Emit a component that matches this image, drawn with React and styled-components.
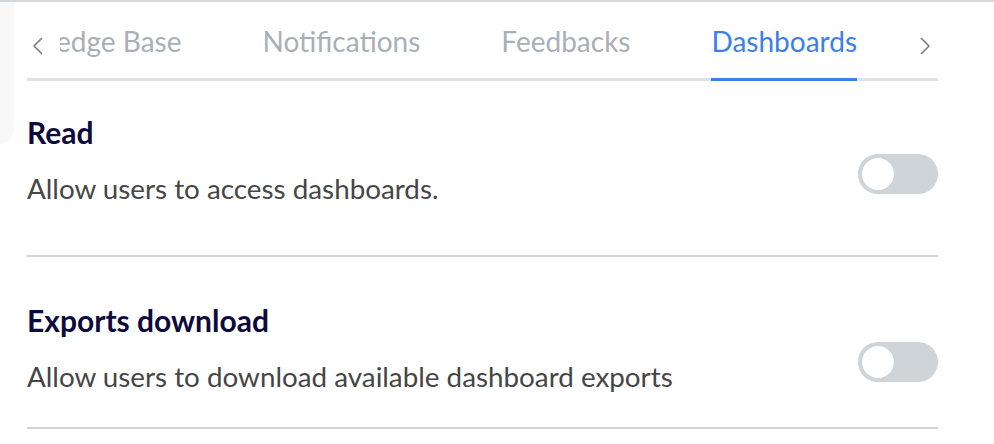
import React from "react";
import styled, { createGlobalStyle } from "styled-components";

const GlobalStyle = createGlobalStyle`
  html, body {
    margin: 0;
    padding: 0;
    background: #ffffff;
  }
  body {
    font-family: "Lato", "Noto Sans", sans-serif;
  }
`;

const Page = styled.div`
  position: relative;
  width: 994px;
  height: 444px;
  box-sizing: border-box;
  border-top: 2px solid #d3d7db;
  padding: 0 56px 0 27px;
  overflow: hidden;

  &::before {
    content: "";
    position: absolute;
    left: 0;
    top: 0;
    width: 14px;
    height: 142px;
    background: #f8f8f9;
    border-bottom-right-radius: 14px;
  }
`;

const TabBar = styled.div`
  display: flex;
  align-items: stretch;
  box-shadow: inset 0 -3px 0 #dfe2e6;
`;

const ArrowButton = styled.button`
  display: flex;
  align-items: center;
  justify-content: ${(p) => (p.$side === "left" ? "flex-start" : "flex-end")};
  width: ${(p) => (p.$side === "left" ? "33px" : "81px")};
  padding: ${(p) => (p.$side === "left" ? "8px 0 0 5px" : "8px 7px 0 0")};
  border: none;
  background: transparent;
  color: #7c7c7c;
  cursor: pointer;
  flex-shrink: 0;
`;

const TabViewport = styled.div`
  flex: 1;
  display: flex;
  justify-content: flex-end;
  gap: 81px;
  overflow: hidden;
  white-space: nowrap;
`;

const Tab = styled.div`
  flex-shrink: 0;
  padding: 24px 0 22px;
  font-size: 28px;
  line-height: 30px;
  color: ${(p) => (p.$active ? "#3b80ea" : "#a9afb7")};
  border-bottom: 3px solid ${(p) => (p.$active ? "#3b80ea" : "transparent")};
`;

const List = styled.div`
  display: flex;
  flex-direction: column;
`;

const Row = styled.div`
  display: flex;
  align-items: center;
  justify-content: space-between;
  padding: 45px 0 33px;
  border-bottom: 2px solid #d1d5d9;

  &:first-child {
    padding: 33px 0 49px;
  }
`;

const TextBlock = styled.div`
  display: flex;
  flex-direction: column;
  gap: 22px;
`;

const Heading = styled.div`
  font-size: 30px;
  line-height: 36px;
  font-weight: 700;
  color: #0d0b3d;
`;

const Description = styled.div`
  font-size: 27.8px;
  line-height: 34px;
  color: #464646;
`;

const Toggle = styled.div`
  position: relative;
  width: 80px;
  height: 40px;
  margin-top: 28px;
  border-radius: 20px;
  background: ${(p) => (p.$on ? "#3b80ea" : "#cfd4d9")};
  flex-shrink: 0;

  &::after {
    content: "";
    position: absolute;
    top: 4px;
    left: ${(p) => (p.$on ? "44px" : "4px")};
    width: 32px;
    height: 32px;
    border-radius: 50%;
    background: #ffffff;
  }
`;

const Chevron = ({ dir }) => (
  <svg width="11" height="18" viewBox="0 0 11 18" fill="none">
    <polyline
      points={dir === "left" ? "9.5,1.5 2,9 9.5,16.5" : "1.5,1.5 9,9 1.5,16.5"}
      stroke="currentColor"
      strokeWidth="1.6"
      strokeLinecap="round"
      strokeLinejoin="round"
    />
  </svg>
);

const tabs = ["Knowledge Base", "Notifications", "Feedbacks", "Dashboards"];

const permissions = [
  { title: "Read", text: "Allow users to access dashboards." },
  { title: "Exports download", text: "Allow users to download available dashboard exports" },
];

export default function App() {
  return (
    <>
      <GlobalStyle />
      <Page>
        <TabBar>
          <ArrowButton $side="left">
            <Chevron dir="left" />
          </ArrowButton>
          <TabViewport>
            {tabs.map((t) => (
              <Tab key={t} $active={t === "Dashboards"}>
                {t}
              </Tab>
            ))}
          </TabViewport>
          <ArrowButton $side="right">
            <Chevron dir="right" />
          </ArrowButton>
        </TabBar>
        <List>
          {permissions.map((p) => (
            <Row key={p.title}>
              <TextBlock>
                <Heading>{p.title}</Heading>
                <Description>{p.text}</Description>
              </TextBlock>
              <Toggle />
            </Row>
          ))}
        </List>
      </Page>
    </>
  );
}
